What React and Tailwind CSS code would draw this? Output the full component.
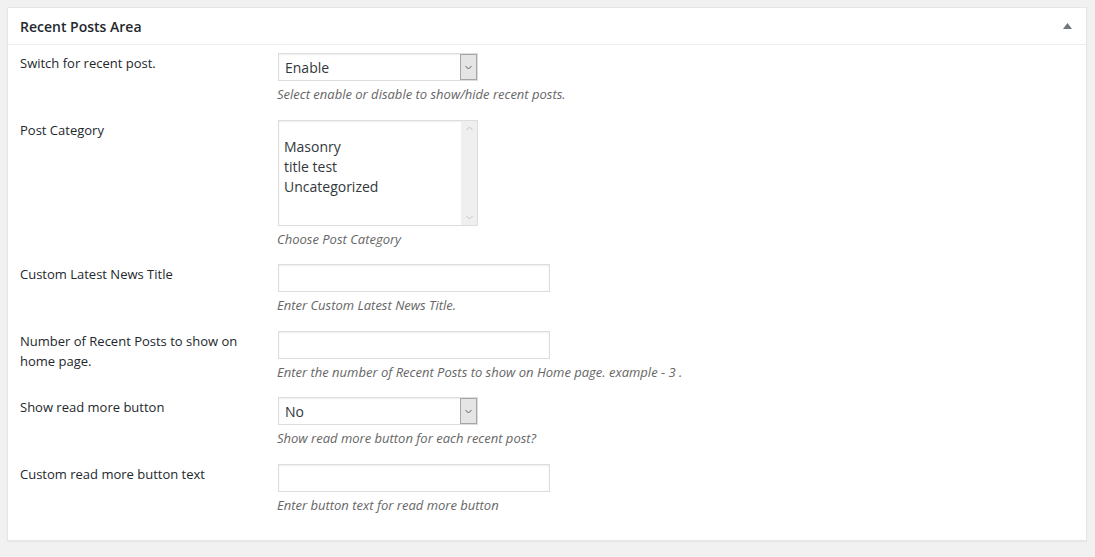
import React from 'react';

const font = { fontFamily: '"Open Sans", "Noto Sans", sans-serif' };

// Dropdown that mimics the old native select with a boxed arrow
const FakeSelect = ({ value }) => (
  <div className="w-[200px] h-[28px] border border-[#dddddd] bg-white flex items-stretch shadow-[inset_0_1px_2px_rgba(0,0,0,0.07)]">
    <div className="flex-1 pl-[6px] flex items-center text-[14px] text-[#32373c]">{value}</div>
    <div className="w-[17px] border border-[#a6a6a6] bg-[#e5e5e5] flex items-center justify-center">
      <svg width="7" height="5" viewBox="0 0 7 5">
        <path d="M0.5 1 L3.5 4 L6.5 1" fill="none" stroke="#606060" strokeWidth="1" />
      </svg>
    </div>
  </div>
);

const TextInput = () => (
  <div className="w-[272px] h-[28px] border border-[#dddddd] bg-white shadow-[inset_0_1px_2px_rgba(0,0,0,0.07)]" />
);

const ListBox = ({ items }) => (
  <div className="w-[200px] h-[106px] border border-[#dddddd] bg-white flex shadow-[inset_0_1px_2px_rgba(0,0,0,0.07)]">
    <div className="flex-1 pt-[16px] pl-[5px] text-[14px] text-[#32373c]">
      {items.map((item) => (
        <div key={item} className="h-[20px] leading-[20px]">{item}</div>
      ))}
    </div>
    <div className="w-[16px] bg-[#efefef] flex flex-col justify-between items-center py-[5px]">
      <svg width="7" height="5" viewBox="0 0 7 5">
        <path d="M0.5 4 L3.5 1 L6.5 4" fill="none" stroke="#c4c4c4" strokeWidth="1" />
      </svg>
      <svg width="7" height="5" viewBox="0 0 7 5">
        <path d="M0.5 1 L3.5 4 L6.5 1" fill="none" stroke="#c4c4c4" strokeWidth="1" />
      </svg>
    </div>
  </div>
);

const Row = ({ label, desc, children }) => (
  <div className="flex">
    <div className="w-[258px] pr-[20px] text-[13px] leading-[20px] text-[#23282d]">{label}</div>
    <div className="flex flex-col">
      {children}
      <p className="mt-[3px] ml-[-1px] text-[13px] leading-[20px] italic text-[#666666]">{desc}</p>
    </div>
  </div>
);

const App = () => {
  return (
    <div className="w-[1095px] h-[557px] bg-[#f1f1f1] pt-[7px] pl-[7px] pr-[8px]" style={font}>
      <div className="h-[534px] bg-white border border-[#e5e5e5] shadow-[0_1px_1px_rgba(0,0,0,0.04)]">
        {/* Box header */}
        <div className="h-[37px] border-b border-[#eeeeee] flex items-center justify-between pl-[12px] pr-[14px]">
          <h2 className="text-[14px] font-semibold text-[#23282d] pt-[1px]">Recent Posts Area</h2>
          <svg width="9" height="6" viewBox="0 0 9 6">
            <path d="M0 6 L4.5 0 L9 6 Z" fill="#72777c" />
          </svg>
        </div>

        {/* Options */}
        <div className="pt-[8px] pl-[12px] flex flex-col gap-[15.6px]">
          <Row label="Switch for recent post." desc="Select enable or disable to show/hide recent posts.">
            <FakeSelect value="Enable" />
          </Row>
          <Row label="Post Category" desc="Choose Post Category">
            <ListBox items={['Masonry', 'title test', 'Uncategorized']} />
          </Row>
          <Row label="Custom Latest News Title" desc="Enter Custom Latest News Title.">
            <TextInput />
          </Row>
          <Row
            label="Number of Recent Posts to show on home page."
            desc="Enter the number of Recent Posts to show on Home page. example - 3 ."
          >
            <TextInput />
          </Row>
          <Row label="Show read more button" desc="Show read more button for each recent post?">
            <FakeSelect value="No" />
          </Row>
          <Row label="Custom read more button text" desc="Enter button text for read more button">
            <TextInput />
          </Row>
        </div>
      </div>
    </div>
  );
};

export default App;
